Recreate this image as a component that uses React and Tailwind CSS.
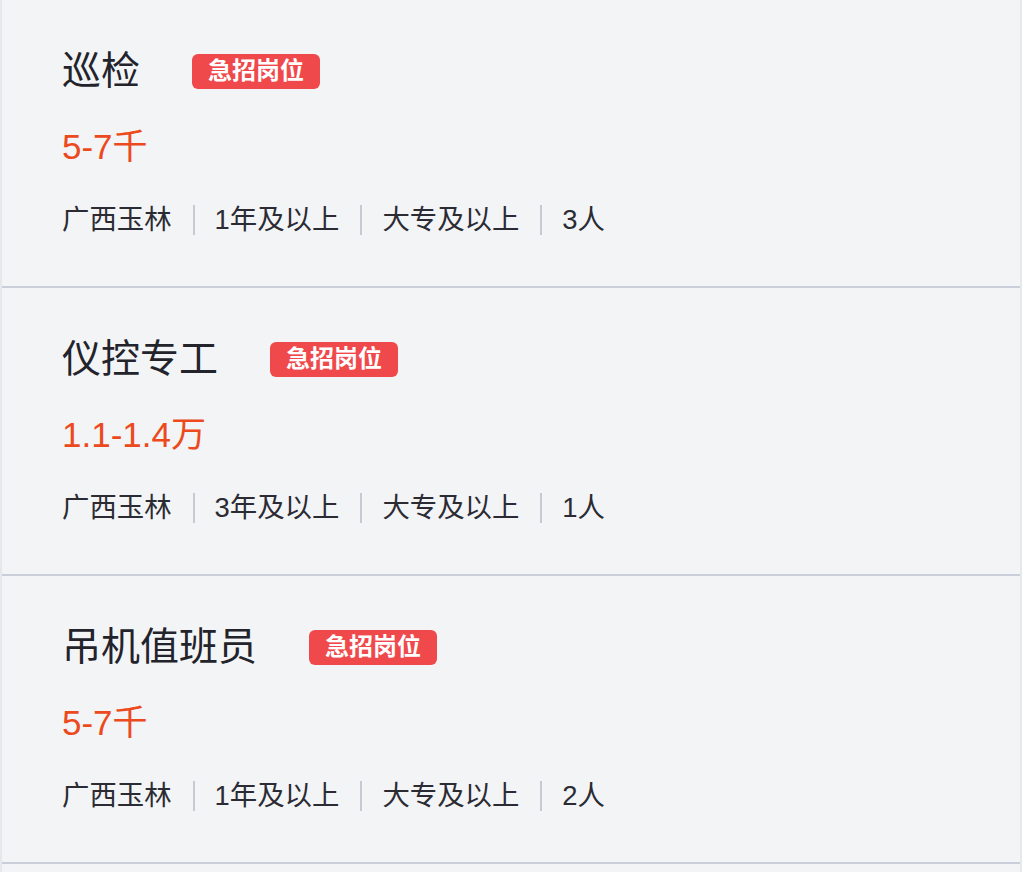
const jobs = [
  { title: "巡检", salary: "5-7千", tags: ["广西玉林", "1年及以上", "大专及以上", "3人"] },
  { title: "仪控专工", salary: "1.1-1.4万", tags: ["广西玉林", "3年及以上", "大专及以上", "1人"] },
  { title: "吊机值班员", salary: "5-7千", tags: ["广西玉林", "1年及以上", "大专及以上", "2人"] },
];

const font = { fontFamily: '"Liberation Sans", "Noto Sans CJK SC", sans-serif' };

const JobCard = ({ job }) => (
  <div className="h-[288px] border-b-2 border-[#c9ced8] pl-[60px] pt-[49px]">
    <div className="flex items-center h-[44px]">
      <h2 className="text-[39px] leading-[44px] text-[#23232b] font-normal">{job.title}</h2>
      <span className="ml-[52px] h-[35px] px-[16px] flex items-center rounded-[6px] bg-[#f0494b] text-white text-[24px] font-bold leading-none">
        急招岗位
      </span>
    </div>
    <div className="mt-[34px] h-[40px] text-[35px] leading-[40px] text-[#ec4a1c]">{job.salary}</div>
    <div className="mt-[37px] flex items-center h-[32px]">
      {job.tags.map((tag, i) => (
        <div key={tag + i} className="flex items-center">
          {i > 0 && <span className="ml-[21px] mr-[20px] w-[2px] h-[30px] bg-[#c6cad1]"></span>}
          <span className="text-[27.4px] leading-[32px] text-[#2b2b33]">{tag}</span>
        </div>
      ))}
    </div>
  </div>
);

export default function App() {
  return (
    <div className="w-[1022px] h-[872px] overflow-hidden bg-[#f3f4f6] border-l-2 border-r-2 border-[#e6e8ec]" style={font}>
      {jobs.map((job) => (
        <JobCard key={job.title} job={job} />
      ))}
    </div>
  );
}
